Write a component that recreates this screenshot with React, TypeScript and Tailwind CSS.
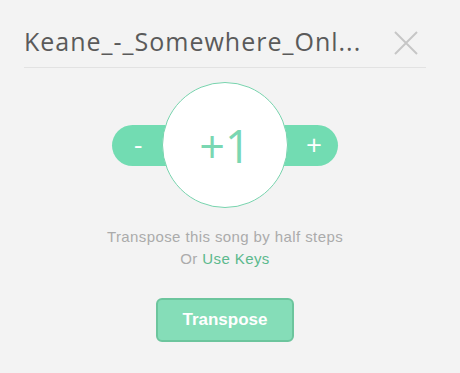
import React from "react";

export default function App() {
  return (
    <div className="w-[460px] h-[373px] bg-[#f3f3f3] pl-[24px] pr-[34px] pt-[22px] overflow-hidden" style={{ fontFamily: '"Open Sans", "Liberation Sans", sans-serif' }}>
      <div className="flex items-center justify-between border-b border-[#e2e2e2] h-[46px] pb-[8px]">
        <div className="text-[25px] leading-[30px] tracking-[1px] text-[#5a5a5a] whitespace-nowrap" style={{ fontFamily: '"Open Sans", sans-serif' }}>
          Keane_-_Somewhere_Onl...
        </div>
        <svg width="26" height="26" viewBox="0 0 26 26" className="mr-[7px] mt-[4px]">
          <path d="M2 2 L24 24 M24 2 L2 24" stroke="#c6c6c6" strokeWidth="2" fill="none" />
        </svg>
      </div>

      <div className="flex justify-center mt-[14px]">
        <div className="flex items-center">
          <div className="w-[60px] h-[41px] bg-[#72dcb2] rounded-l-full flex items-center pl-[22px] text-white text-[26px] leading-none pb-[2px]">
            -
          </div>
          <div className="relative z-10 -mx-[10px] w-[126px] h-[126px] rounded-full bg-white border-[1.5px] border-[#78d4ae] flex items-center justify-center text-[#7ad7b2] text-[45px] leading-none">
            +1
          </div>
          <div className="w-[60px] h-[41px] bg-[#72dcb2] rounded-r-full flex items-center justify-end pr-[16px] text-white text-[28px] leading-none pb-[3px]">
            +
          </div>
        </div>
      </div>

      <div className="mt-[18px] text-center text-[15px] leading-[22px] tracking-[0.4px] text-[#ababab]" style={{ fontFamily: '"Liberation Sans", Arial, sans-serif' }}>
        <div>Transpose this song by half steps</div>
        <div>
          Or <span className="text-[#5cb98d]">Use Keys</span>
        </div>
      </div>

      <div className="flex justify-center mt-[28px]">
        <button className="w-[138px] h-[44px] rounded-[6px] bg-[#85ddb8] border-2 border-[#6cc59d] text-white text-[17px] font-bold" style={{ fontFamily: '"Liberation Sans", Arial, sans-serif' }}>
          Transpose
        </button>
      </div>
    </div>
  );
}
